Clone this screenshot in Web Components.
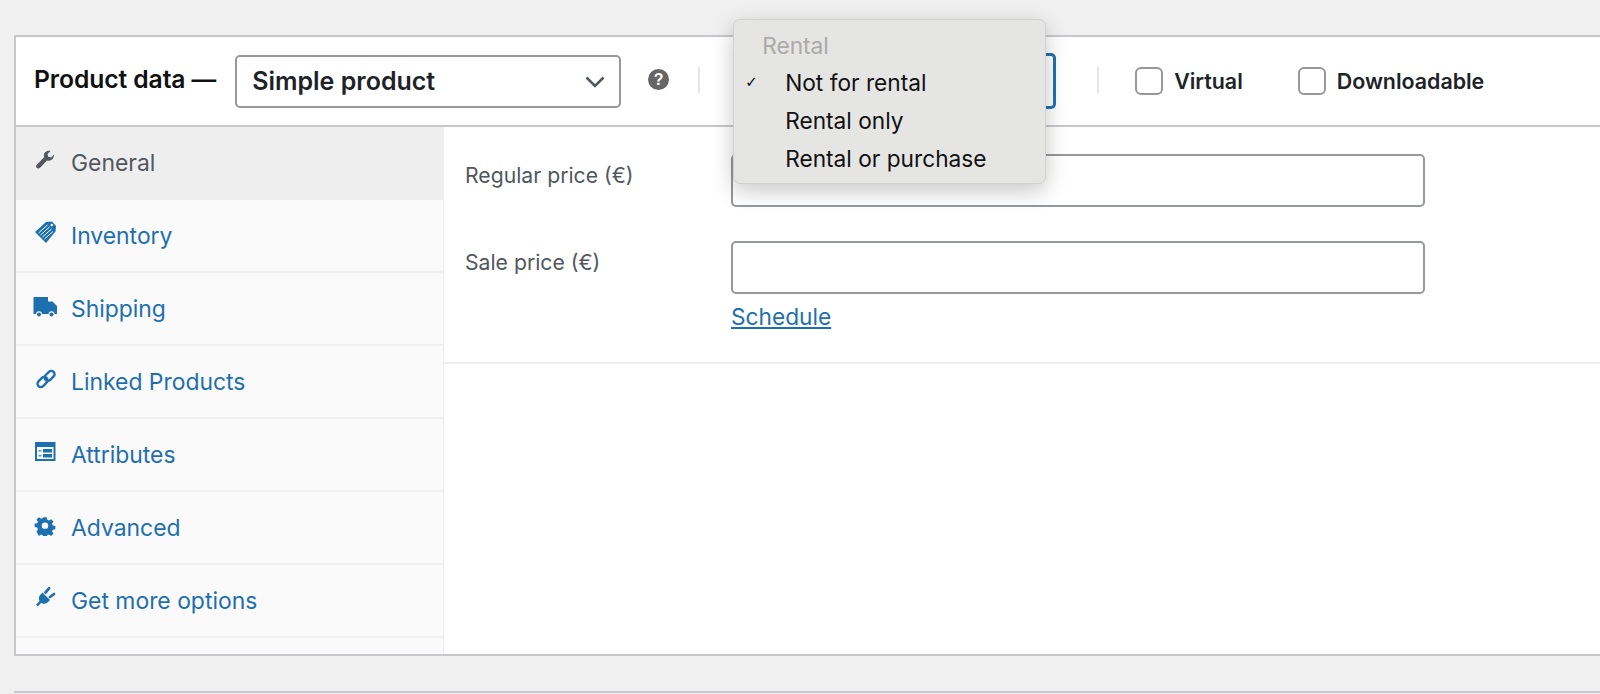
<!DOCTYPE html>
<html lang="en">
<head>
<meta charset="utf-8">
<title>Product data</title>
<style>
    html, body {
        margin: 0;
        height: 100%;
    }
    body {
        background: #f0f0f1;
        font-family: Inter, "Liberation Sans", sans-serif;
        overflow: hidden;
    }
</style>
</head>
<body>

<pd-panel>
    <pd-header slot="header">
        <pd-select>Simple product</pd-select>
        <pd-help></pd-help>
        <pd-rental></pd-rental>
        <pd-check>Virtual</pd-check>
        <pd-check style="margin-left: 55px">Downloadable</pd-check>
    </pd-header>
    <pd-tabs slot="tabs">
        <pd-tab icon="wrench" active>General</pd-tab>
        <pd-tab icon="tag">Inventory</pd-tab>
        <pd-tab icon="truck">Shipping</pd-tab>
        <pd-tab icon="link">Linked Products</pd-tab>
        <pd-tab icon="table">Attributes</pd-tab>
        <pd-tab icon="gear">Advanced</pd-tab>
        <pd-tab icon="plug">Get more options</pd-tab>
    </pd-tabs>
    <pd-pricing slot="content">
        <pd-field label="Regular price (€)"></pd-field>
        <pd-field label="Sale price (€)"><a href="#">Schedule</a></pd-field>
    </pd-pricing>
</pd-panel>
<pd-next></pd-next>

<script>
const ICONS = {
    wrench: `<svg viewBox="0 0 24 24" width="24" height="24"><path d="M21.600 5.600l-3.500 3.300-3-.8-.8-2.900 3.400-3.400c-2.200-.7-4.600-.2-6 1.400-1.400 1.500-1.800 3.500-1.100 5.400L3 16.300c-1.700 1.500-1.500 3.100-.6 4.100 1 1 2.600 1.100 4-.5l7.300-7.500c1.900.6 3.900.1 5.500-1.200 1.600-1.500 2.100-3.600 2.400-5.600z" fill="currentColor" transform="translate(1.500 2.300) scale(.91)"/></svg>`,
    tag: `<svg viewBox="0 0 24 24" width="24" height="24"><path d="M2 12L13 2l6-.5 4 4.500-.5 5.500L13 23z" fill="currentColor"/><path d="M5.500 13L14.500 5M7.500 15L16.500 7M9.500 17L18.500 9M11.500 19L20 11.500" stroke="#fafafa" stroke-width="1"/><circle cx="18.800" cy="5" r="1.300" fill="#fafafa"/></svg>`,
    truck: `<svg viewBox="0 0 24 24" width="24" height="24"><path d="M.5 4h14.500v4.500h4.500l4.500 4.500v8H.5z" fill="currentColor"/><circle cx="6" cy="21.300" r="3" fill="#fafafa"/><circle cx="18.500" cy="21.300" r="3" fill="#fafafa"/><circle cx="6" cy="21.500" r="2" fill="currentColor"/><circle cx="18.500" cy="21.500" r="2" fill="currentColor"/></svg>`,
    link: `<svg viewBox="0 0 24 24" width="24" height="24"><g fill="none" stroke="currentColor" stroke-width="2.700" transform="translate(1.600 1.700) scale(.88)"><rect x="2.500" y="12.500" width="13" height="7.500" rx="3.750" transform="rotate(-45 9 16.250)"/><rect x="10.500" y="5.500" width="13" height="7.500" rx="3.750" transform="rotate(-45 17 9.250)"/></g></svg>`,
    table: `<svg viewBox="0 0 24 24" width="24" height="24"><path d="M2 3h20.500v19H2z" fill="currentColor"/><path d="M4 8h16.500v12H4z" fill="#fafafa"/><path d="M10 10h9v3.500h-9zM10 15h9v3.500h-9z" fill="currentColor"/><path d="M5.500 11h3v1.600h-3zM5.500 15.800h3v1.600h-3z" fill="currentColor" opacity=".7"/></svg>`,
    gear: `<svg viewBox="0 0 24 24" width="24" height="24"><path fill-rule="evenodd" fill="currentColor" d="M10 2h4l.6 3 2 .9 2.600-1.700 2.800 2.800-1.700 2.600.9 2 3 .6v3.800l-3 .6-.9 2 1.700 2.600-2.800 2.800-2.600-1.700-2 .9-.6 3h-4l-.6-3-2-.9-2.600 1.700L2 18.700l1.700-2.600-.9-2-3-.6V9.700l3-.6.9-2L2 4.500 4.800 2.000l2.600 1.700 2-.9zM12 8a3.800 3.800 0 1 0 0 7.600A3.800 3.800 0 0 0 12 8z" transform="translate(1.800 3.600) scale(.85)"/></svg>`,
    plug: `<svg viewBox="0 0 24 24" width="24" height="24"><path d="M9.500 7.500l7.500 7.500-2.500 2.500c-2 1.500-4.500 1.500-6.500.5L4.800 21.500 3 19.700l3.500-3.700c-1-2-.8-4.600.8-6.300z" fill="currentColor"/><path d="M12.500 7.500L16 3.300M17 12l4-3" stroke="currentColor" stroke-width="2.800" stroke-linecap="round"/></svg>`
};

function define(name, html) {
    const template = document.createElement("template");
    template.innerHTML = html;
    customElements.define(name, class extends HTMLElement {
        constructor() {
            super();
            this.attachShadow({mode: "open"}).appendChild(template.content.cloneNode(true));
        }
    });
}

define("pd-panel", `
    <style>
        :host {
            display: block;
            margin: 35px 0 0 14px;
            background: #fff;
            border: 2px solid #c8c8cb;
            border-right: 0;
        }
        #body {
            display: flex;
            height: 527px;
        }
        ::slotted([slot="tabs"]) {
            flex: 0 0 428px;
        }
        ::slotted([slot="content"]) {
            flex: 1;
        }
    </style>
    <slot name="header"></slot>
    <div id="body">
        <slot name="tabs"></slot>
        <slot name="content"></slot>
    </div>
`);

define("pd-header", `
    <style>
        :host {
            display: flex;
            align-items: center;
            height: 88px;
            padding-left: 18px;
            border-bottom: 2px solid #c8c8cb;
            color: #1d2327;
        }
        #title {
            font-size: 24.700px;
            font-weight: 600;
            letter-spacing: -.1px;
            color: #111;
            margin: -4px 19px 0 0;
            white-space: nowrap;
        }
    </style>
    <span id="title">Product data —</span>
    <slot></slot>
`);

define("pd-select", `
    <style>
        :host {
            display: flex;
            align-items: center;
            justify-content: space-between;
            box-sizing: border-box;
            flex: 0 0 386px;
            height: 53px;
            padding: 0 14px 0 15px;
            background: #fff;
            border: 2px solid #96989d;
            border-radius: 5px;
            font-size: 25px;
            font-weight: 600;
            color: #1d2327;
        }
        svg {
            display: block;
            margin-top: 2px;
        }
    </style>
    <span><slot></slot></span>
    <svg width="20" height="12" viewBox="0 0 20 12"><path d="M1.500 1.500L10 10l8.500-8.500" fill="none" stroke="#50575e" stroke-width="2.500"/></svg>
`);

define("pd-help", `
    <style>
        :host {
            display: flex;
            align-items: center;
            height: 26px;
            margin: -3px 0 0 27px;
            padding-right: 31px;
            position: relative;
        }
        #dot {
            width: 21px;
            height: 21px;
            border-radius: 50%;
            background: #666;
            color: #fff;
            font: 700 16px/21px "Liberation Sans", sans-serif;
            text-align: center;
        }
        #sep {
            width: 2px;
            height: 26px;
            background: #e6e6e6;
            position: absolute;
            right: 0;
            top: 0;
        }
    </style>
    <div id="dot">?</div>
    <div id="sep"></div>
`);

define("pd-rental", `
    <style>
        :host {
            display: block;
            position: relative;
            box-sizing: border-box;
            flex: 0 0 323px;
            height: 56px;
            margin: 0 79px 0 33px;
            border: 3px solid #2271b1;
            border-radius: 5px;
        }
        :host::after {
            content: "";
            position: absolute;
            right: -46px;
            top: 11px;
            width: 2px;
            height: 26px;
            background: #e6e6e6;
        }
        #menu {
            position: absolute;
            left: -3px;
            top: -37px;
            box-sizing: border-box;
            width: 313px;
            height: 165px;
            padding-top: 6.500px;
            background: #e5e5e3;
            border: 1px solid #d0d0ce;
            border-radius: 7px;
            box-shadow: 0 7px 22px rgba(0, 0, 0, .22);
            font-size: 22.700px;
            color: #111;
            z-index: 2;
        }
        .row {
            position: relative;
            height: 37.800px;
            line-height: 37.800px;
            padding-left: 51px;
            white-space: nowrap;
        }
        .group {
            padding-left: 28px;
            color: #aaa;
        }
        .check {
            position: absolute;
            left: 11px;
            top: 0;
            font-family: "DejaVu Sans", sans-serif;
            font-size: 15px;
        }
    </style>
    <div id="menu">
        <div class="row group">Rental</div>
        <div class="row"><span class="check">✓</span>Not for rental</div>
        <div class="row">Rental only</div>
        <div class="row">Rental or purchase</div>
    </div>
`);

define("pd-check", `
    <style>
        :host {
            display: flex;
            align-items: center;
            gap: 11px;
            font-size: 21.400px;
            font-weight: 600;
            color: #1d2327;
            white-space: nowrap;
        }
        #box {
            box-sizing: border-box;
            width: 28px;
            height: 28px;
            margin-top: -1px;
            border: 2px solid #96989d;
            border-radius: 6px;
            background: #fff;
        }
        span {
            margin-top: -1px;
        }
    </style>
    <div id="box"></div>
    <span><slot></slot></span>
`);

define("pd-tabs", `
    <style>
        :host {
            display: block;
            box-sizing: border-box;
            background: #fafafa;
            border-right: 1px solid #eee;
        }
    </style>
    <slot></slot>
`);

define("pd-tab", `
    <style>
        :host {
            display: flex;
            align-items: center;
            box-sizing: border-box;
            height: 73px;
            padding-left: 17px;
            color: #1e6fb0;
            border-bottom: 2px solid #f0f0f0;
            font-size: 22.900px;
        }
        :host([active]) {
            background: #eee;
            color: #50575e;
            border-bottom-color: #eee;
        }
        #icon {
            flex: 0 0 24px;
            height: 24px;
            margin: -7px 14px 0 0;
        }
        svg {
            display: block;
        }
    </style>
    <div id="icon"></div>
    <span><slot></slot></span>
`);

define("pd-pricing", `
    <style>
        :host {
            display: block;
            box-sizing: border-box;
            height: 237px;
            padding: 27px 0 0 21px;
            border-bottom: 2px solid #eee;
        }
    </style>
    <slot></slot>
`);

define("pd-field", `
    <style>
        :host {
            display: grid;
            grid-template-columns: 266px 694px;
            margin-bottom: 34px;
        }
        label {
            font-size: 21.200px;
            color: #50575e;
            margin-top: 9px;
            line-height: 24px;
        }
        input {
            display: block;
            box-sizing: border-box;
            width: 100%;
            height: 53px;
            border: 2px solid #96989d;
            border-radius: 5px;
            background: #fff;
            outline: none;
        }
        #extra {
            grid-column: 2;
            font-size: 22.700px;
            line-height: 26px;
        }
        ::slotted(a) {
            display: inline-block;
            margin-top: 10px;
            color: #1e6fb0;
        }
    </style>
    <label></label>
    <input type="text">
    <div id="extra"><slot></slot></div>
`);

define("pd-next", `
    <style>
        :host {
            display: block;
            margin: 35px 0 0 14px;
            border-top: 2px solid #c8c8cb;
        }
    </style>
`);

document.querySelectorAll("pd-tab").forEach(tab => {
    tab.shadowRoot.getElementById("icon").innerHTML = ICONS[tab.getAttribute("icon")];
});
document.querySelectorAll("pd-field").forEach(field => {
    field.shadowRoot.querySelector("label").textContent = field.getAttribute("label");
});
</script>
</body>
</html>
